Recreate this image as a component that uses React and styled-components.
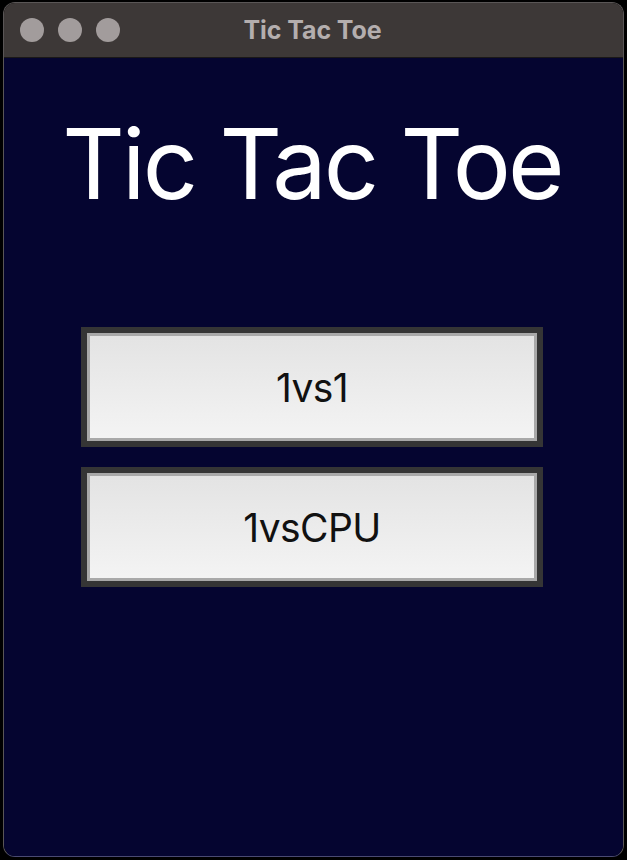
import React from 'react';
import styled, { createGlobalStyle } from 'styled-components';

const GlobalStyle = createGlobalStyle`
	html, body {
		margin: 0;
		padding: 0;
		background: #000;
	}
	body {
		font-family: Inter, "Noto Sans", "Liberation Sans", sans-serif;
	}
`;

const Screen = styled.div`
	width: 627px;
	height: 860px;
	padding: 2px 3px 3px 3px;
	box-sizing: border-box;
`;

const Window = styled.div`
	display: flex;
	flex-direction: column;
	height: 100%;
	border-radius: 12px;
	border: 1px solid #5a5656;
	border-bottom-color: #4a4a72;
	overflow: hidden;
	box-sizing: border-box;
`;

const TitleBar = styled.div`
	position: relative;
	display: flex;
	align-items: center;
	justify-content: center;
	height: 54px;
	flex-shrink: 0;
	background: #3d3837;
	border-bottom: 1px solid #1a1818;
`;

const Lights = styled.div`
	position: absolute;
	left: 16px;
	top: 0;
	bottom: 0;
	display: flex;
	align-items: center;
	gap: 14px;
`;

const Light = styled.span`
	width: 24px;
	height: 24px;
	border-radius: 50%;
	background: #a29c9c;
`;

const WindowTitle = styled.div`
	font-size: 25px;
	font-weight: 700;
	color: #b4aeae;
	letter-spacing: -0.1px;
	margin-left: -2px;
`;

const Content = styled.div`
	flex: 1;
	display: flex;
	flex-direction: column;
	align-items: center;
	padding-right: 3px;
	background: #050530;
`;

const Heading = styled.h1`
	margin: 57px 0 0 0;
	font-size: 97px;
	line-height: 97px;
	font-weight: 400;
	color: #fff;
	letter-spacing: -2.9px;
`;

const Menu = styled.div`
	display: flex;
	flex-direction: column;
	gap: 20px;
	margin-top: 115px;
`;

const MenuButton = styled.button`
	width: 462px;
	height: 120px;
	padding: 0;
	box-sizing: border-box;
	border: 6px solid #353535;
	box-shadow: inset 0 0 0 3px #a9a9a9;
	background: linear-gradient(to bottom, #e3e3e3, #f4f4f4);
	font-family: inherit;
	font-size: 39px;
	letter-spacing: -0.6px;
	color: #111;
	cursor: pointer;
`;

function App() {
	return (
		<Screen>
			<GlobalStyle />
			<Window>
				<TitleBar>
					<Lights>
						<Light />
						<Light />
						<Light />
					</Lights>
					<WindowTitle>Tic Tac Toe</WindowTitle>
				</TitleBar>
				<Content>
					<Heading>Tic Tac Toe</Heading>
					<Menu>
						<MenuButton>1vs1</MenuButton>
						<MenuButton>1vsCPU</MenuButton>
					</Menu>
				</Content>
			</Window>
		</Screen>
	);
}

export default App;
